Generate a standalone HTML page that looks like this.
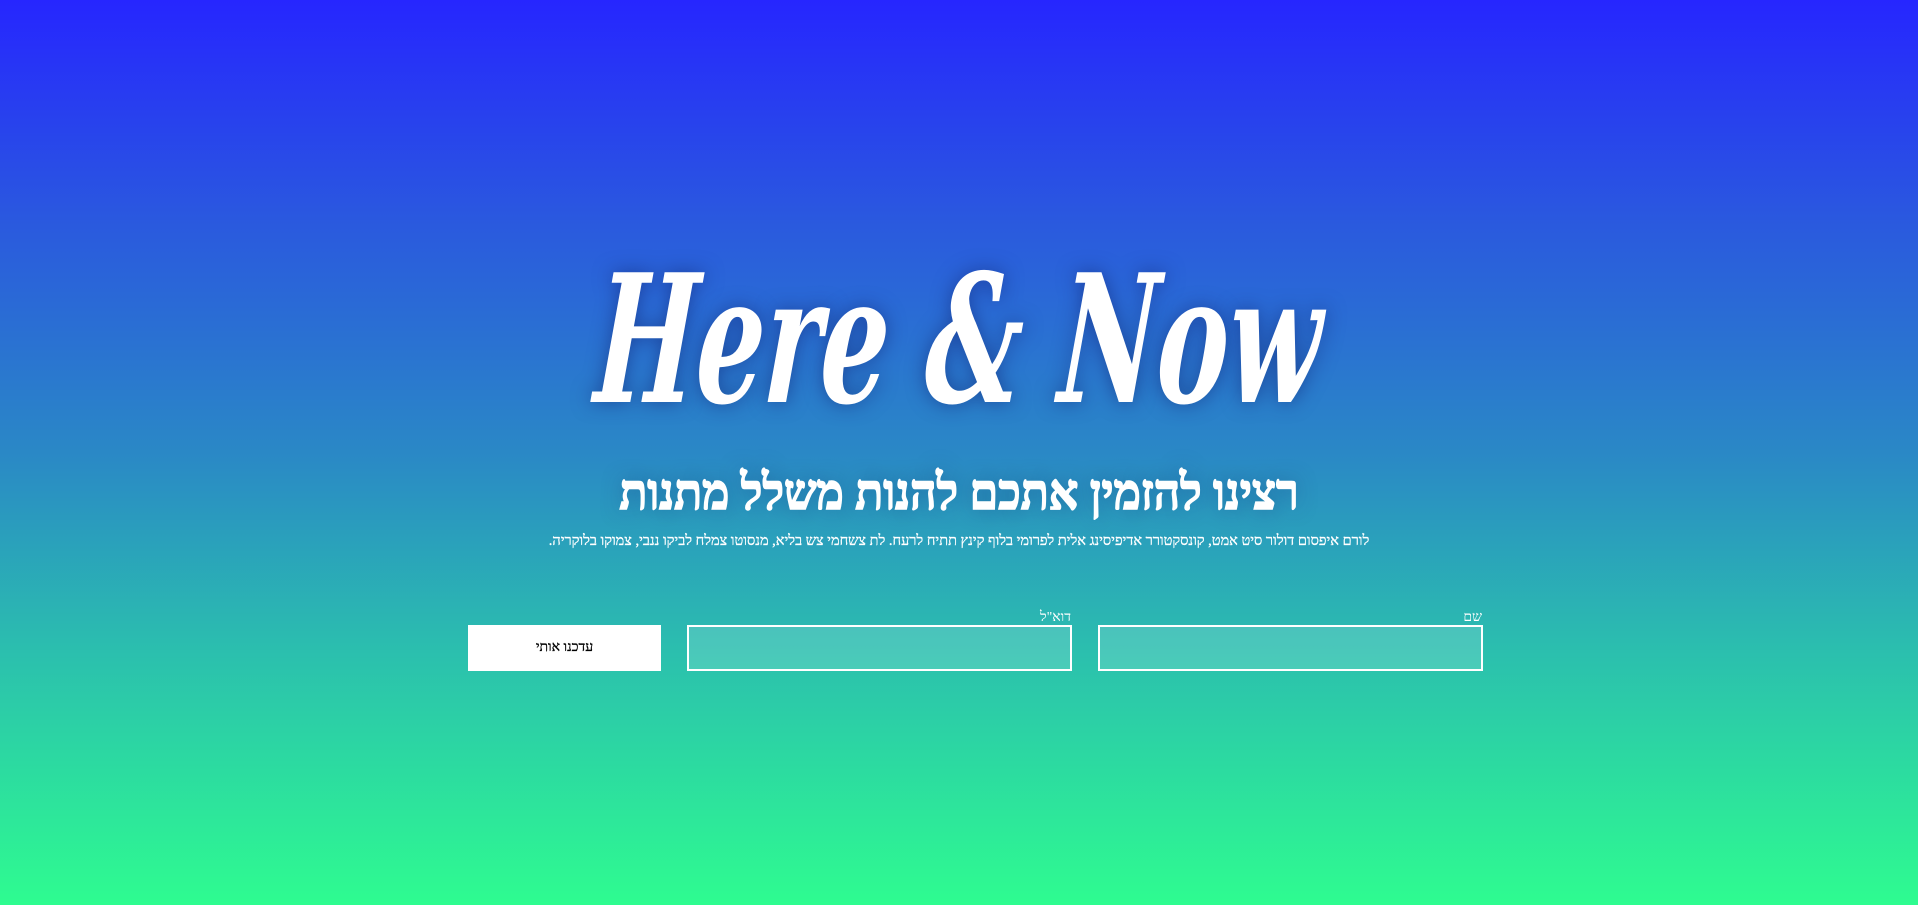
<!DOCTYPE html>
<html><head><meta charset="utf-8"><style>
html,body{margin:0;padding:0;width:1918px;height:905px;overflow:hidden}
body{background:linear-gradient(to bottom,#2626ff 0%,#2a5ade 25%,#2a88c6 50%,#2bbfae 72%,#2efc90 100%);font-family:"Liberation Serif","DejaVu Serif",serif;color:#fff;position:relative}
.logo{position:absolute;left:0;width:1918px;top:240px;text-align:center;font-family:"DejaVu Serif",serif;font-style:italic;font-weight:bold;font-size:178px;line-height:200px;letter-spacing:0;text-shadow:0 0 25px rgba(20,40,120,.6);transform:scaleX(.6) skewX(-6deg)}
h1{position:absolute;left:0;width:1918px;top:464px;margin:0;text-align:center;font-size:50px;line-height:56px;font-weight:bold;direction:rtl;-webkit-text-stroke:1.6px #fff;text-shadow:0 0 20px rgba(30,60,120,.5);transform:scaleX(.92)}
.sub{position:absolute;left:0;width:1918px;top:533px;text-align:center;font-size:14.5px;direction:rtl;-webkit-text-stroke:.3px #fff}
.inp{position:absolute;top:625px;height:46px;box-sizing:border-box;border:2px solid #fff;background:rgba(255,255,255,.15)}
.lbl{position:absolute;top:610px;font-size:14px;direction:rtl}
.btn{position:absolute;left:468px;top:625px;width:193px;height:46px;background:#fff;color:#000;font-size:14px;text-align:center;line-height:46px;direction:rtl;-webkit-text-stroke:.3px #000}
</style></head><body>
<div class="logo">Here &amp; Now</div>
<h1>רצינו להזמין אתכם להנות משלל מתנות</h1>
<div class="sub">לורם איפסום דולור סיט אמט, קונסקטורר אדיפיסינג אלית לפרומי בלוף קינץ תתיח לרעח. לת צשחמי צש בליא, מנסוטו צמלח לביקו ננבי, צמוקו בלוקריה.</div>
<div class="lbl" style="right:436px">שם</div>
<div class="inp" style="left:1098px;width:385px"></div>
<div class="lbl" style="right:847px">דוא"ל</div>
<div class="inp" style="left:687px;width:385px"></div>
<div class="btn">עדכנו אותי</div>
</body></html>
